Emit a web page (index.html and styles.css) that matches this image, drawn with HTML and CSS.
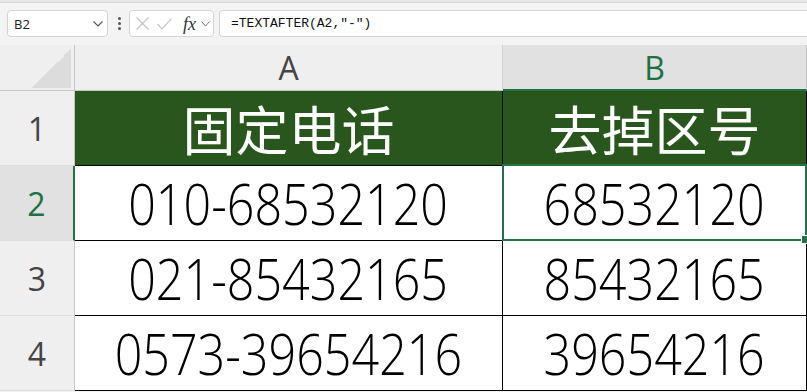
FILE: index.html
```html
<!DOCTYPE html>
<html lang="zh-CN">
<head>
<meta charset="utf-8">
<title>Sheet</title>
<link rel="stylesheet" href="styles.css">
</head>
<body>
<div class="strip"></div>
<div class="fbar">
  <div class="namebox">
    <span>B2</span>
    <svg class="chev" width="10" height="6" viewBox="0 0 10 6"><polyline points="0.5,0.5 5,5 9.5,0.5" fill="none" stroke="#555" stroke-width="1.1"/></svg>
  </div>
  <div class="kebab"><i></i><i></i><i></i></div>
  <div class="fxbox">
    <svg class="xicon" width="13" height="13" viewBox="0 0 13 13"><path d="M0.5 0.5 L12.5 12.5 M12.5 0.5 L0.5 12.5" stroke="#c4c4c4" stroke-width="1.2" fill="none"/></svg>
    <svg class="ok" width="15" height="12" viewBox="0 0 15 12"><polyline points="0.5,6 5,10.8 14.5,0.6" fill="none" stroke="#c4c4c4" stroke-width="1.2"/></svg>
    <span class="fx">fx</span>
    <svg class="chev2" width="9" height="6" viewBox="0 0 9 6"><polyline points="0.5,0.5 4.5,5 8.5,0.5" fill="none" stroke="#777" stroke-width="1"/></svg>
  </div>
  <div class="formula">=TEXTAFTER(A2,"-")</div>
</div>
<div class="sheet">
  <div class="corner"><div class="tri"></div></div>
  <div class="colhead">A</div>
  <div class="colhead sel">B</div>

  <div class="rowhead">1</div>
  <div class="cell title">固定电话</div>
  <div class="cell title">去掉区号</div>

  <div class="rowhead sel">2</div>
  <div class="cell num"><span>010-68532120</span></div>
  <div class="cell num active"><span>68532120</span></div>

  <div class="rowhead">3</div>
  <div class="cell num"><span>021-85432165</span></div>
  <div class="cell num"><span>85432165</span></div>

  <div class="rowhead">4</div>
  <div class="cell num"><span>0573-39654216</span></div>
  <div class="cell num"><span>39654216</span></div>
</div>
</body>
</html>
```
FILE: styles.css
```css
* { box-sizing: border-box; margin: 0; padding: 0; }
html, body { width: 807px; height: 392px; overflow: hidden; }
body { background: #f3f3f3; font-family: "Open Sans", "Noto Sans", sans-serif; }

.strip { height: 3px; background: #e6e6e6; border-bottom: 1px solid #d9d9d9; }

.fbar { display: flex; align-items: center; height: 42px; padding: 7px 0 8px 7px; }

.namebox {
  width: 101px; height: 27px; background: #fff;
  border: 1px solid #d4d4d4; border-radius: 4px;
  display: flex; align-items: center; justify-content: space-between;
  padding: 0 4px 0 6px; font-size: 13px; color: #222;
}

.kebab { margin-left: 10px; display: flex; flex-direction: column; gap: 2px; }
.kebab i { display: block; width: 3px; height: 3px; border-radius: 50%; background: #555; }

.fxbox {
  margin-left: 8px; width: 85px; height: 27px; background: #fff;
  border: 1px solid #d4d4d4; border-radius: 4px;
  display: flex; align-items: center; padding-left: 6px;
}
.ok { margin-left: 8px; }
.fx { margin-left: 11px; font-family: "Liberation Serif", serif; font-style: italic; font-size: 18px; color: #333; line-height: 1; }
.chev2 { margin-left: 5px; }

.formula {
  margin-left: 5px; flex: 1; height: 27px; background: #fff;
  border: 1px solid #d4d4d4; border-right: 0; border-radius: 4px 0 0 4px;
  font-family: "Liberation Mono", monospace; font-size: 13px; color: #111;
  padding-left: 11px; display: flex; align-items: center;
}

.sheet {
  display: grid;
  grid-template-columns: 75px 428px 304px;
  grid-template-rows: 46px repeat(4, 75px);
}

.corner {
  background: #efefef; border-right: 1px solid #c6c6c6; border-bottom: 1px solid #c6c6c6;
  display: flex; align-items: flex-end; justify-content: flex-end; padding: 0 3px 2px 0;
}
.tri { width: 39px; height: 39px; background: linear-gradient(135deg, transparent 50%, #dcdcdc 50%); }

.colhead {
  background: #efefef; border-right: 1px solid #d2d2d2; border-bottom: 1px solid #c6c6c6;
  display: flex; align-items: center; justify-content: center;
  font-size: 32px; color: #444;
}
.colhead.sel { background: #e1e1e1; color: #1e7145; border-bottom: 2px solid #217346; border-right-color: #c6c6c6; }

.rowhead {
  background: #efefef; border-right: 1px solid #c6c6c6; border-bottom: 1px solid #dedede;
  display: flex; align-items: center; justify-content: center;
  font-size: 32px; color: #444;
}
.rowhead.sel { background: #e1e1e1; color: #1e7145; border-right: 2px solid #217346; }

.cell {
  background: #fff; border-right: 1px solid #000; border-bottom: 1px solid #000;
  display: flex; align-items: center; justify-content: center; color: #000;
}
.cell.title {
  background: #28561c; color: #fff;
  font-family: "Noto Sans CJK SC", sans-serif; font-weight: 400; font-size: 53px;
}
.num span {
  display: inline-block; font-family: "Open Sans", sans-serif; font-weight: 300;
  font-size: 57px; transform: scaleX(0.85); line-height: 1;
}

.cell.active { position: relative; }
.cell.active::after {
  content: ""; position: absolute; inset: -2px -1px -1px -1px;
  border: 2px solid #217346;
}
.cell.active::before {
  content: ""; position: absolute; right: -4px; bottom: -4px; width: 7px; height: 7px;
  background: #217346; border: 1px solid #fff; z-index: 2;
}
```
